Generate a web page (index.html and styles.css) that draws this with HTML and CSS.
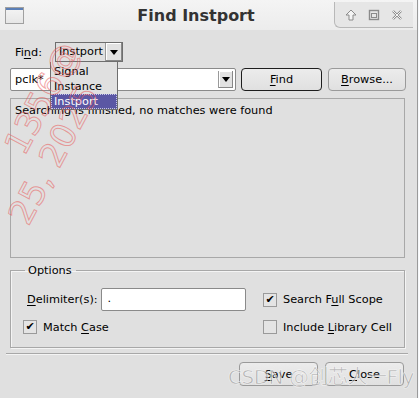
FILE: index.html
```html
<!DOCTYPE html>
<html lang="en">
<head>
    <meta charset="UTF-8">
    <title>Find Instport</title>
    <link rel="stylesheet" href="styles.css">
</head>
<body>
    <div class="window">
        <div class="titlebar">
            <div class="win-icon"></div>
            <div class="title">Find Instport</div>
            <div class="controls">
                <svg width="12" height="12" viewBox="0 0 12 12"><path d="M6 1 L11 6 H8 V11 H4 V6 H1 Z" fill="#f4f4f4" stroke="#8a8a8a" stroke-width="1"/></svg>
                <svg width="12" height="12" viewBox="0 0 12 12"><rect x="1.5" y="1.5" width="9" height="9" fill="none" stroke="#8a8a8a" stroke-width="1.4"/><rect x="3.5" y="4.5" width="5" height="4" fill="none" stroke="#8a8a8a" stroke-width="1"/></svg>
                <svg width="12" height="12" viewBox="0 0 12 12"><path d="M2 2 L10 10 M10 2 L2 10" stroke="#8a8a8a" stroke-width="2.4"/><path d="M2 2 L10 10 M10 2 L2 10" stroke="#f4f4f4" stroke-width="1"/></svg>
            </div>
        </div>

        <div class="content">
            <div class="row-find">
                <span class="label">Fi<u>n</u>d:</span>
                <div class="type-combo">
                    <span class="type-value">Instport</span>
                    <span class="arrow-btn"><span class="tri"></span></span>
                </div>
            </div>

            <div class="row-search">
                <div class="entry-combo">
                    <span class="entry-text">pclk*</span>
                    <span class="arrow-btn"><span class="tri"></span></span>
                </div>
                <button class="btn btn-default"><u>F</u>ind</button>
                <button class="btn"><u>B</u>rowse...</button>
            </div>

            <div class="results">Searching is finished, no matches were found</div>

            <fieldset class="options">
                <legend>Options</legend>
                <div class="opt-grid">
                    <div class="opt-delim">
                        <span class="delim-label"><u>D</u>elimiter(s):</span>
                        <div class="entry">.</div>
                    </div>
                    <label class="check"><span class="box on">&#10004;</span><span>Search F<u>u</u>ll Scope</span></label>
                    <label class="check match"><span class="box on">&#10004;</span><span>Match <u>C</u>ase</span></label>
                    <label class="check"><span class="box"></span><span>Include <u>L</u>ibrary Cell</span></label>
                </div>
            </fieldset>

            <div class="separator"></div>

            <div class="row-bottom">
                <button class="btn"><u>S</u>ave</button>
                <button class="btn"><u>C</u>lose</button>
            </div>
        </div>

        <!-- open dropdown list of the Find combo -->
        <ul class="dropdown">
            <li>Signal</li>
            <li>Instance</li>
            <li class="selected">Instport</li>
        </ul>

        <div class="stamp stamp-a">1356@</div>
        <div class="stamp stamp-b">25, 2025</div>
        <div class="csdn">CSDN @创芯人一Fly</div>
    </div>
</body>
</html>
```

FILE: styles.css
```css
body {margin: 0; background: #f6f8fb; font-family: "DejaVu Sans", sans-serif; font-size: 11.3px; color: #000;}
u {text-decoration: underline; text-underline-offset: 2px;}

.window {width: 417px; height: 398px; background: #e0e0e0; border-right: 1px solid #9a9a9a; position: relative; overflow: hidden;}

.titlebar {height: 30px; display: flex; align-items: center; background: linear-gradient(to bottom, #f4f4f4, #ececec); position: relative;}
.win-icon {width: 17px; height: 15px; margin-left: 5px; margin-top: 1px; border: 1px solid #a0a0a0; background: linear-gradient(to bottom, #5b7fb7 0, #5b7fb7 2px, #f2f2f2 2px, #e6e6e6);}
.title {flex: 1; text-align: center; font-weight: bold; font-size: 16px; color: #333; padding-left: 34px; margin-top: 1px;}
.controls {width: 70px; height: 25px; margin-right: 4px; align-self: flex-start; margin-top: 2px; display: flex; align-items: center; justify-content: space-around; background: #e6e6e6; border-left: 1px solid #b8b8b8; border-bottom: 1px solid #b8b8b8; border-bottom-left-radius: 6px; padding: 0 4px;}

.content {padding: 12px 0 0 10px;}

.row-find {display: flex; align-items: center; height: 20px;}
.label {width: 40px; padding-left: 5px;}
.type-combo {display: flex; width: 66px; height: 18px; border: 1px solid #6e6e6e; background: #e0e0e0;}
.type-value {flex: 1; padding-left: 3px; line-height: 18px;}
.arrow-btn {width: 16px; border-left: 1px solid #9a9a9a; background: #e2e2e2; box-shadow: inset -1px -1px #888, inset 1px 1px #fff; display: flex; align-items: center; justify-content: center;}
.tri {width: 0; height: 0; border-left: 4px solid transparent; border-right: 4px solid transparent; border-top: 5px solid #000;}

.row-search {display: flex; height: 23px; margin-top: 6px;}
.entry-combo {display: flex; width: 223px; border: 1px solid #8a8a8a; background: #fff; padding: 1px 1px 1px 0; border-radius: 2px;}
.entry-text {flex: 1; padding-left: 4px; line-height: 20px;}
.entry-combo .arrow-btn {width: 14px; margin: 1px 1px 1px 0;}
.btn {font-family: "DejaVu Sans", sans-serif; font-size: 11.3px; color: #000; height: 23px; width: 78px; border: 1px solid #9a9a9a; border-radius: 4px; background: linear-gradient(to bottom, #ececec, #e0e0e0); padding: 0; margin-left: 6px;}
.btn-default {border-color: #1e1e1e; width: 81px; margin-left: 5px;}

.results {width: 389px; height: 153px; margin-top: 7px; border: 1px solid #a8a8a8; padding: 5px 0 0 4px; line-height: 14px;}

.options {width: 374px; margin: 6px 0 0 0; padding: 11px 8px 13px 11px; border: 1px solid #a8a8a8; box-shadow: inset 1px 1px #f4f4f4, 1px 1px #f4f4f4;}
.options legend {padding: 0 4px 0 3px; margin-left: 3px; line-height: 13px;}
.opt-grid {display: grid; grid-template-columns: 241px 1fr; grid-template-rows: 23px 14px; row-gap: 9px; align-items: center;}
.opt-delim {display: flex; align-items: center; padding-left: 5px;}
.delim-label {flex: none; margin-right: 3px;}
.entry {flex: none; width: 137px; height: 21px; background: #fff; border: 1px solid #8a8a8a; border-radius: 2px; padding-left: 6px; line-height: 20px;}
.check {display: flex; align-items: center; gap: 6px; white-space: nowrap;}
.box {width: 12px; height: 12px; border: 1px solid #9a9a9a; background: #e4e4e4; font-size: 11px; line-height: 12px; text-align: center; display: inline-block; flex: none;}
.match {padding-left: 1px;}

.separator {height: 1px; background: #a8a8a8; border-bottom: 1px solid #f4f4f4; margin: 5px 0 0 -4px; width: 402px;}

.row-bottom {display: flex; justify-content: flex-end; width: 394px; margin-top: 7px;}
.row-bottom .btn {width: 79px; height: 24px; margin-left: 7px;}

.dropdown {position: absolute; left: 50px; top: 62px; width: 66px; margin: 0; padding: 2px 0 0 0; list-style: none; background: #e0e0e0; border: 1px solid #6e6e6e; border-top: none;}
.dropdown li {height: 15px; line-height: 15px; padding-left: 3px;}
.dropdown li.selected {background: #5b57a4; color: #fff; outline: 1px dotted #c8c8e8; outline-offset: -1px;}

.stamp {position: absolute; font-family: "DejaVu Sans", sans-serif; font-size: 34px; color: transparent; -webkit-text-stroke: 1px rgba(232, 90, 90, 0.55); transform: rotate(-62deg); transform-origin: left top; white-space: nowrap; pointer-events: none;}
.stamp-a {left: -4px; top: 142px;}
.stamp-b {left: 0px; top: 212px;}

.csdn {position: absolute; left: 228px; top: 361px; font-family: "DejaVu Sans", "Noto Sans CJK SC", sans-serif; font-size: 20px; color: rgba(130, 130, 130, 0.5); -webkit-text-stroke: 0.6px rgba(255, 255, 255, 0.8); white-space: nowrap; letter-spacing: -0.5px;}
```
